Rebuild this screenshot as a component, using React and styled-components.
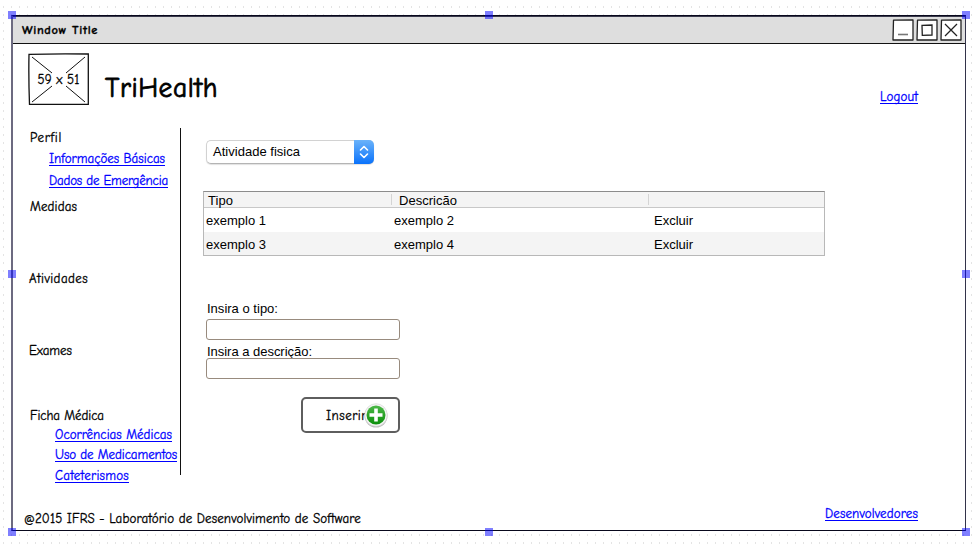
import React, { useLayoutEffect, useRef, useState } from "react";
import styled, { createGlobalStyle } from "styled-components";

const Global = createGlobalStyle`
  * { box-sizing: border-box; }
  body { margin: 0; overflow: hidden; background: #fff; }
`;

const hand = `"Comic Sans MS", "Comic Neue", "Noto Sans", sans-serif`;
const sans = `"Liberation Sans", Arial, sans-serif`;

const Canvas = styled.div`
  width: 977px;
  height: 544px;
  padding: 15px 11px 12px 11px;
  background-color: #fff;
  background-image:
    linear-gradient(to bottom, #fff 6px, transparent 6px),
    linear-gradient(to right, transparent 3px, #e4e4e4 3px, #e4e4e4 4px, transparent 4px);
  background-size: 8px 8px;
`;

const Frame = styled.main`
  position: relative;
  display: flex;
  flex-direction: column;
  width: 955px;
  height: 516px;
  background: #fff;
  border-style: solid;
  border-width: 1px 1px 1px 2px;
  border-color: #08081c #33334a #08081c #6c6a80;
`;

const Handle = styled.i`
  position: absolute;
  z-index: 2;
  left: ${(p) => p.$x}px;
  top: ${(p) => p.$y}px;
  width: 8px;
  height: 8px;
  background: rgba(0, 0, 255, 0.5);
`;

const TitleBar = styled.header`
  display: flex;
  align-items: center;
  justify-content: space-between;
  height: 28px;
  padding: 0 3px 0 9px;
  background: #dedede;
  border-top: 1px solid #3a3a4c;
  border-bottom: 1px solid #111;
`;

const WindowButtons = styled.div`
  display: flex;
  gap: 2px;
  margin-top: -1px;
  svg { display: block; }
`;

const Brand = styled.div`
  display: flex;
  height: 84px;
  padding: 9px 0 0 15px;
`;

const ImageBox = styled.div`
  display: grid;
  width: 61px;
  height: 52px;
  margin-right: 16px;
  place-items: center;
  > * { grid-area: 1 / 1; }
`;

const Word = styled.span`
  display: block;
  width: ${(p) => p.$w}px;
  height: ${(p) => p.$h || 17}px;
  line-height: ${(p) => p.$h || 17}px;
  margin-top: ${(p) => p.$mt || 0}px;
  margin-left: ${(p) => p.$ml || 0}px;
  font-family: ${(p) => (p.$sans ? sans : hand)};
  font-size: ${(p) => p.$size || 13}px;
  font-weight: ${(p) => p.$weight || 400};
  font-variant-ligatures: none;
  color: ${(p) => (p.$link ? "#0000ff" : "#000")};
  -webkit-text-stroke: ${(p) => (p.$sans ? 0 : p.$stroke || 0.3)}px currentColor;
  white-space: nowrap;
  flex: none;
`;

const Glyphs = styled.span`
  display: inline-block;
  height: ${(p) => (p.$link ? "14px" : "auto")};
  line-height: ${(p) => (p.$link ? "15px" : "inherit")};
  border-bottom: ${(p) => (p.$link ? "1px solid #0000ff" : "0")};
  box-sizing: content-box;
  vertical-align: top;
`;

/* Spreads the letters so that a label takes exactly the width it is given. */
function Label({ w, children, link, ...rest }) {
  const ref = useRef(null);
  const [spacing, setSpacing] = useState(0);
  useLayoutEffect(() => {
    const natural = ref.current.getBoundingClientRect().width;
    setSpacing((w - natural) / children.length);
  }, [w, children]);
  return (
    <Word $w={w} $link={link} {...rest}>
      <Glyphs ref={ref} $link={link} style={{ letterSpacing: spacing }}>{children}</Glyphs>
    </Word>
  );
}

const Body = styled.div`
  display: flex;
  height: 348px;
`;

const Sidebar = styled.nav`
  width: 168px;
  height: 347px;
  padding-left: 16px;
  border-right: 1px solid #111;
  flex: none;
`;

const Content = styled.section`
  width: 650px;
  padding: 12px 0 0 22px;
`;

const Select = styled.div`
  display: flex;
  justify-content: space-between;
  width: 168px;
  height: 24px;
  margin-left: 3px;
  background: #fff;
  border: 1px solid #d2d2d2;
  border-bottom-color: #b4b4b4;
  border-right: 0;
  border-radius: 5px;
  box-shadow: 0 1px 1px rgba(0, 0, 0, 0.12);
`;

const Stepper = styled.div`
  display: grid;
  place-items: center;
  width: 20px;
  height: 24px;
  margin-top: -1px;
  border-radius: 0 5px 5px 0;
  background: linear-gradient(#6bb3fa, #0a72fb);
`;

const Table = styled.div`
  width: 622px;
  height: 65px;
  margin-top: 27px;
  overflow: hidden;
  border: 1px solid #b8b8b8;
  border-top-color: #8c8c8c;
`;

const Row = styled.div`
  display: grid;
  grid-template-columns: 188px 257px 1fr;
  height: ${(p) => (p.$head ? 16 : p.$shade ? 23 : 24)}px;
  background: ${(p) => (p.$shade ? "#f4f4f4" : "#fff")};
  border-bottom: ${(p) => (p.$head ? "1px solid #c8c8c8" : "0")};
`;

const Cell = styled.div`
  padding-left: ${(p) => p.$pad}px;
`;

const HeadCell = styled.div`
  height: 11px;
  margin-top: 2px;
  padding-left: ${(p) => p.$pad}px;
  border-right: ${(p) => (p.$last ? "0" : "1px solid #d4d4d4")};
`;

const Form = styled.div`
  display: flex;
  flex-direction: column;
  padding-left: 3px;
  margin-top: 44px;
`;

const Input = styled.input`
  display: block;
  width: 194px;
  height: 21px;
  margin: ${(p) => p.$mt}px 0 0;
  border: 1px solid #988b7e;
  border-radius: 3px;
  background: transparent;
`;

const InsertButton = styled.button`
  display: flex;
  align-items: center;
  width: 99px;
  height: 36px;
  margin: 18px 0 0 95px;
  padding: 0 0 0 23px;
  border: 2px solid #5e5e5e;
  border-radius: 5px;
  background: #fff;
  svg { margin: -1px 0 0 -3px; flex: none; overflow: visible; }
`;

const Footer = styled.footer`
  display: flex;
  justify-content: space-between;
  padding: 29px 47px 0 11px;
`;

const handles = [
  [-5, -5], [472, -5], [949, -5],
  [-5, 254], [949, 254],
  [-5, 512], [472, 512], [949, 512],
];

const glyphs = {
  min: <path d="M6 15.5H16" stroke="#777" strokeWidth="1.6" />,
  max: <path d="M6 6.3L16 6V16L6.3 16.3Z" />,
  close: <path d="M5 5L17 17M17 5L5 17" />,
};

function WindowButton({ kind }) {
  return (
    <svg width="22" height="22" viewBox="0 0 22 22" fill="none" stroke="#222" strokeWidth="1.3">
      <path d="M1.5 1.2L21 1L21 21L1 21Z" fill="#fff" strokeLinejoin="round" />
      {glyphs[kind]}
    </svg>
  );
}

export default function App() {
  return (
    <Canvas>
      <Global />
      <Frame>
        {handles.map(([x, y]) => <Handle key={x + ":" + y} $x={x} $y={y} />)}
        <TitleBar>
          <Label w={76} $size={12.5} $weight={700}>Window Title</Label>
          <WindowButtons>
            <WindowButton kind="min" />
            <WindowButton kind="max" />
            <WindowButton kind="close" />
          </WindowButtons>
        </TitleBar>
        <Brand>
          <ImageBox>
            <svg width="61" height="52" fill="none" stroke="#111" strokeWidth="1.3">
              <path d="M1 1.3Q30 .5 60.3 1V51.3H1.5Q.5 25 1 1.3Z" />
              <path d="M4 4L24 20M57 4L38 20M4 49L24 33M57 49L38 33" strokeWidth="1" />
            </svg>
            <Label w={42}>59 x 51</Label>
          </ImageBox>
          <Label w={113} $h={40} $mt={15} $size={27.5} $stroke={0.8}>TriHealth</Label>
          <Label w={38} $mt={36} $ml={662} link>Logout</Label>
        </Brand>
        <Body>
          <Sidebar>
            <Label w={32} $mt={1} $ml={1}>Perfil</Label>
            <Label w={116} $mt={5} $ml={20} link>Informações Básicas</Label>
            <Label w={119} $mt={5} $ml={20} link>Dados de Emergência</Label>
            <Label w={47} $mt={8} $ml={1}>Medidas</Label>
            <Label w={59} $mt={55}>Atividades</Label>
            <Label w={43} $mt={55}>Exames</Label>
            <Label w={74} $mt={48} $ml={1}>Ficha Médica</Label>
            <Label w={117} $mt={3} $ml={26} link>Ocorrências Médicas</Label>
            <Label w={122} $mt={3} $ml={26} link>Uso de Medicamentos</Label>
            <Label w={74} $mt={4} $ml={26} link>Cateterismos</Label>
          </Sidebar>
          <Content>
            <Select>
              <Label w={87} $sans $size={13} $h={22} $ml={6}>Atividade fisica</Label>
              <Stepper>
                <svg width="10" height="14" fill="none" stroke="#fff" strokeWidth="1.6" strokeLinecap="round" strokeLinejoin="round">
                  <path d="M1.5 5L5 1.5L8.5 5M1.5 9L5 12.5L8.5 9" />
                </svg>
              </Stepper>
            </Select>
            <Table>
              <Row $head $shade>
                <HeadCell $pad={4}><Label w={25} $sans $size={13} $h={14}>Tipo</Label></HeadCell>
                <HeadCell $pad={7}><Label w={58} $sans $size={13} $h={14}>Descricão</Label></HeadCell>
                <HeadCell $last />
              </Row>
              <Row>
                <Cell $pad={2}><Label w={60} $sans $size={13} $h={26}>exemplo 1</Label></Cell>
                <Cell $pad={2}><Label w={60} $sans $size={13} $h={26}>exemplo 2</Label></Cell>
                <Cell $pad={5}><Label w={39} $sans $size={13} $h={26}>Excluir</Label></Cell>
              </Row>
              <Row $shade>
                <Cell $pad={2}><Label w={60} $sans $size={13} $h={26}>exemplo 3</Label></Cell>
                <Cell $pad={2}><Label w={60} $sans $size={13} $h={26}>exemplo 4</Label></Cell>
                <Cell $pad={5}><Label w={39} $sans $size={13} $h={26}>Excluir</Label></Cell>
              </Row>
            </Table>
            <Form>
              <Label w={71} $sans $size={13} $h={17} $ml={1}>Insira o tipo:</Label>
              <Input $mt={2} />
              <Label w={105} $sans $size={13} $h={24} $ml={1}>Insira a descrição:</Label>
              <Input $mt={-6} />
              <InsertButton>
                <Label w={41}>Inserir</Label>
                <svg width="24" height="24">
                  <defs>
                    <linearGradient id="green" x2="0" y2="1">
                      <stop stopColor="#4cb848" />
                      <stop offset="1" stopColor="#0b8f0b" />
                    </linearGradient>
                  </defs>
                  <circle cx="12" cy="13" r="11.5" fill="#000" opacity=".25" />
                  <circle cx="12" cy="12" r="11.3" fill="#f4f4f4" stroke="#ccc" strokeWidth=".5" />
                  <circle cx="12" cy="12" r="9.5" fill="url(#green)" />
                  <path d="M12 5.5V18.5M5.5 12H18.5" stroke="#fff" strokeWidth="3.6" />
                </svg>
              </InsertButton>
            </Form>
          </Content>
        </Body>
        <Footer>
          <Label w={337} $mt={5}>@2015 IFRS - Laboratório de Desenvolvimento de Software</Label>
          <Label w={93} $mt={1} link>Desenvolvedores</Label>
        </Footer>
      </Frame>
    </Canvas>
  );
}
